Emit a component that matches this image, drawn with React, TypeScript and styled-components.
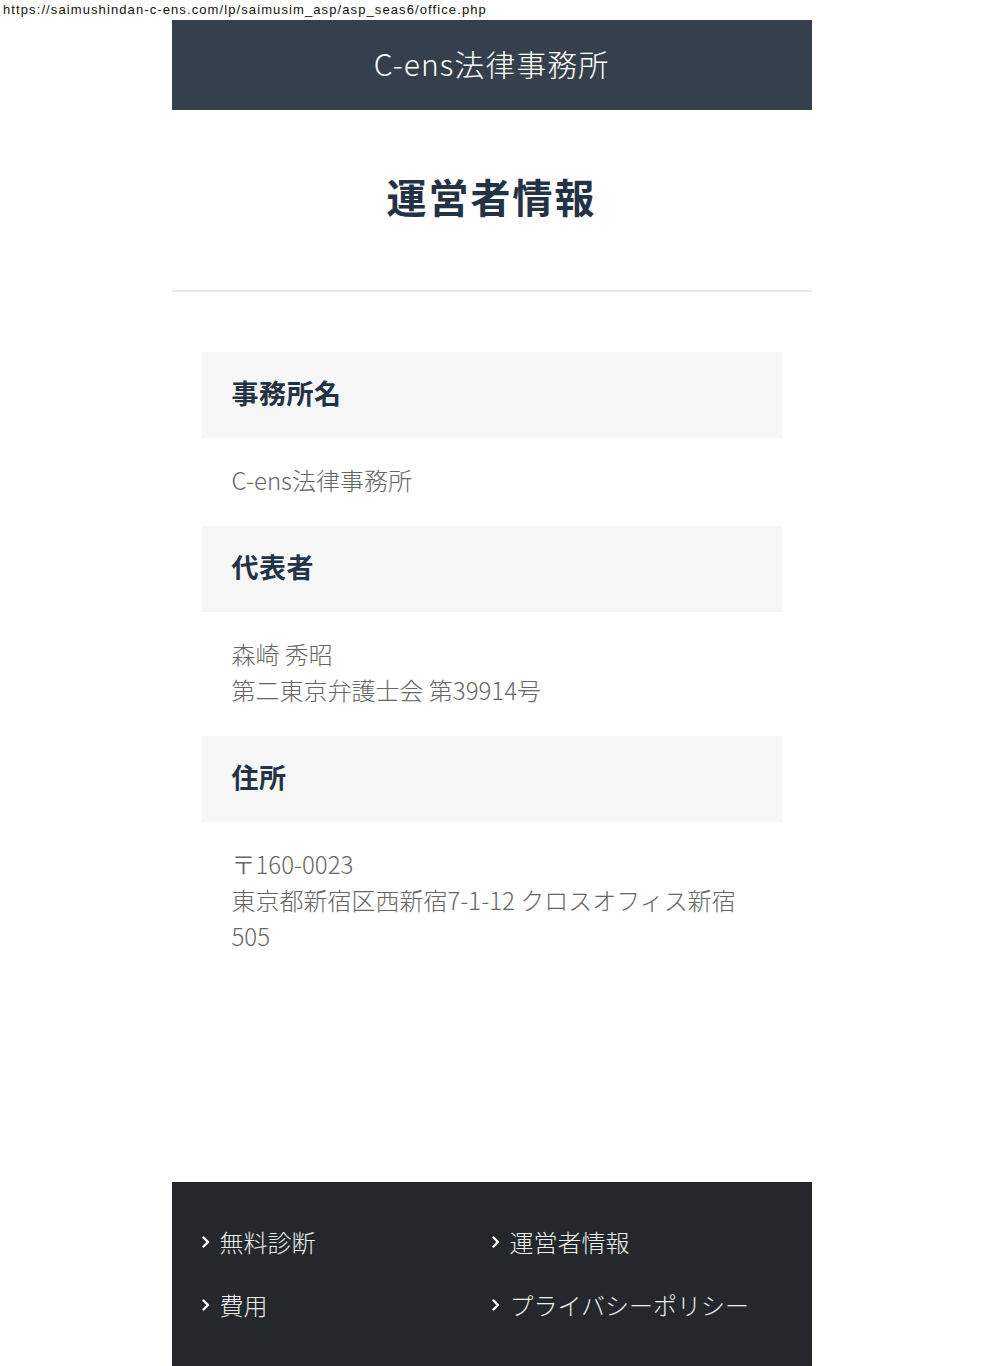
import React from "react";
import styled, { createGlobalStyle } from "styled-components";

const GlobalStyle = createGlobalStyle`
  html, body {
    margin: 0;
    padding: 0;
    background: #fff;
  }
  body {
    font-family: "Noto Sans CJK JP", "Noto Sans", sans-serif;
    -webkit-font-smoothing: antialiased;
  }
`;

const UrlLine = styled.div`
  height: 20px;
  padding-left: 3px;
  font-family: "Liberation Sans", "Noto Sans CJK JP", sans-serif;
  font-size: 13px;
  letter-spacing: 1.1px;
  line-height: 20px;
  color: #111;
  white-space: nowrap;
`;

const Page = styled.div`
  width: 640px;
  margin: 0 auto;
`;

const Header = styled.header`
  height: 90px;
  background-color: #36404c;
  display: flex;
  align-items: center;
  justify-content: center;
`;

const SiteTitle = styled.h1`
  margin: 0;
  padding-bottom: 4px;
  font-size: 30px;
  font-weight: 300;
  color: #fff;
  letter-spacing: 1px;
`;

const PageHeading = styled.h2`
  margin: 0;
  padding: 56px 0 64px;
  font-size: 40px;
  line-height: 60px;
  font-weight: 700;
  color: #243245;
  text-align: center;
  letter-spacing: 2px;
  border-bottom: 2px solid #e9e9e9;
`;

const InfoList = styled.dl`
  margin: 0;
  padding: 60px 30px 200px;
`;

const InfoLabel = styled.dt`
  background-color: #f6f6f6;
  padding: 23px 30px 27px;
  font-size: 27px;
  line-height: 36px;
  font-weight: 700;
  letter-spacing: 0.5px;
  color: #243245;
`;

const InfoValue = styled.dd`
  margin: 0;
  padding: 24px 30px 28px;
  font-size: 24px;
  line-height: 36px;
  font-weight: 300;
  color: #666;
`;

const Footer = styled.footer`
  background-color: #24272c;
  padding: 28px 30px 62px;
`;

const FooterNav = styled.ul`
  list-style: none;
  margin: 0;
  padding: 0;
  display: grid;
  grid-template-columns: 1fr 1fr;
`;

const FooterItem = styled.li`
  display: flex;
  align-items: center;
  gap: 10px;
  height: 63px;
  font-size: 24px;
  font-weight: 300;
  color: #eee;
`;

const Chevron = () => (
  <svg width="8" height="12" viewBox="0 0 8 12" fill="none">
    <polyline
      points="1.5,1.5 6,6 1.5,10.5"
      stroke="#fff"
      strokeWidth="2.4"
      strokeLinecap="round"
      strokeLinejoin="round"
    />
  </svg>
);

const links = ["無料診断", "運営者情報", "費用", "プライバシーポリシー"];

const App: React.FC = () => (
  <>
    <GlobalStyle />
    <UrlLine>https://saimushindan-c-ens.com/lp/saimusim_asp/asp_seas6/office.php</UrlLine>
    <Page>
      <Header>
        <SiteTitle>C-ens法律事務所</SiteTitle>
      </Header>
      <PageHeading>運営者情報</PageHeading>
      <InfoList>
        <InfoLabel>事務所名</InfoLabel>
        <InfoValue>C-ens法律事務所</InfoValue>
        <InfoLabel>代表者</InfoLabel>
        <InfoValue>
          森崎 秀昭
          <br />
          第二東京弁護士会 第39914号
        </InfoValue>
        <InfoLabel>住所</InfoLabel>
        <InfoValue>
          〒160-0023
          <br />
          東京都新宿区西新宿7-1-12 クロスオフィス新宿505
        </InfoValue>
      </InfoList>
      <Footer>
        <FooterNav>
          {links.map((l) => (
            <FooterItem key={l}>
              <Chevron />
              {l}
            </FooterItem>
          ))}
        </FooterNav>
      </Footer>
    </Page>
  </>
);

export default App;
